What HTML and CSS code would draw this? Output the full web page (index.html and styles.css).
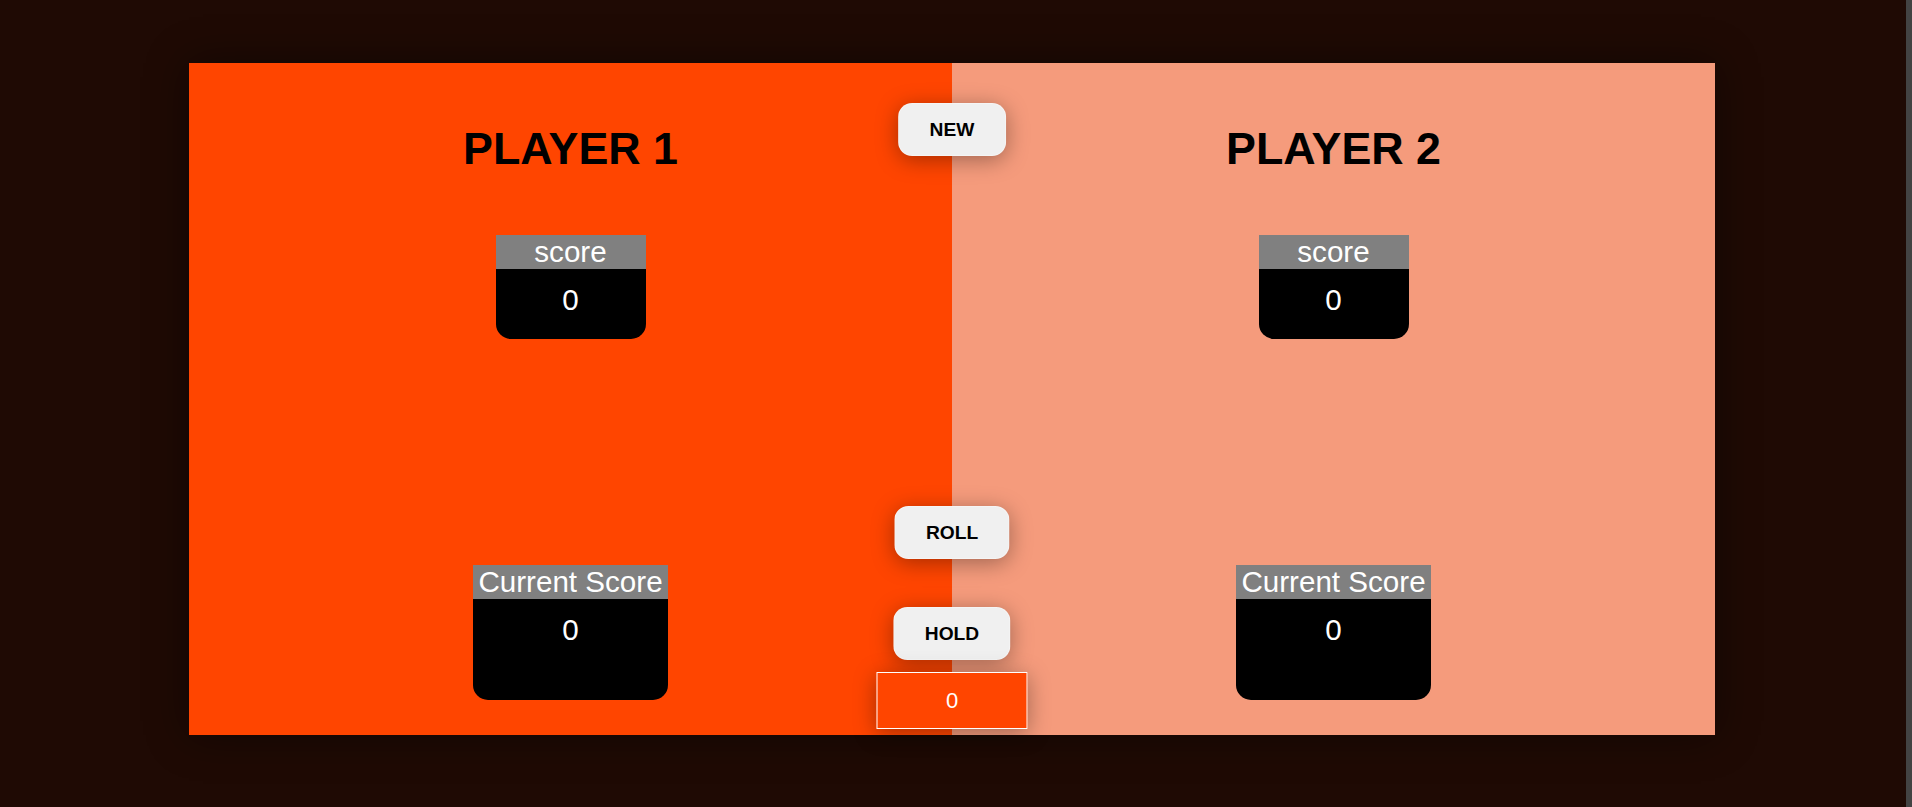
FILE: index.html
```html
<!DOCTYPE html>
<html lang="en">
<head>
<meta charset="utf-8">
<title>Pig Game</title>
<link rel="stylesheet" href="styles.css">
</head>
<body>
<div class="page">
  <main class="game">
    <section class="player player--active">
      <h2 class="player-name">PLAYER 1</h2>
      <div class="score-box">
        <div class="box-label">score</div>
        <div class="box-value">0</div>
      </div>
      <div class="current-box">
        <div class="box-label">Current Score</div>
        <div class="box-value">0</div>
      </div>
    </section>
    <section class="player player--inactive">
      <h2 class="player-name">PLAYER 2</h2>
      <div class="score-box">
        <div class="box-label">score</div>
        <div class="box-value">0</div>
      </div>
      <div class="current-box">
        <div class="box-label">Current Score</div>
        <div class="box-value">0</div>
      </div>
    </section>
    <button class="btn btn--new">NEW</button>
    <button class="btn btn--roll">ROLL</button>
    <button class="btn btn--hold">HOLD</button>
    <div class="dice">0</div>
  </main>
</div>
</body>
</html>
```

FILE: styles.css
```css
html {
  background: #434343;
}
body {
  margin: 0;
  width: 1906px;
  height: 807px;
  background: #1f0a04;
  font-family: "Liberation Sans", Arial, sans-serif;
  overflow: hidden;
}
.page {
  padding-top: 63px;
  padding-left: 189px;
}
.game {
  position: relative;
  width: 1526px;
  height: 672px;
  display: flex;
  box-shadow: 0 0 40px rgba(0, 0, 0, 0.45);
}
.player {
  flex: 1;
  display: flex;
  flex-direction: column;
  align-items: center;
  padding: 60px 0 35px;
  box-sizing: border-box;
}
.player--active {
  background: #ff4500;
}
.player--inactive {
  background: #f59b7c;
}
.player-name {
  margin: 0;
  font-size: 44.8px;
  line-height: 50px;
  font-weight: 700;
  color: #000;
}
.score-box,
.current-box {
  background: #000;
  color: #fff;
  text-align: center;
  border-radius: 0 0 15px 15px;
  font-size: 29.6px;
}
.score-box {
  margin-top: 62px;
  width: 150px;
  height: 104px;
}
.current-box {
  margin-top: auto;
  width: 195px;
  height: 135px;
}
.box-label {
  background: #808080;
  height: 34px;
  line-height: 34px;
  white-space: nowrap;
}
.box-value {
  padding-top: 14px;
  line-height: 34px;
}
.btn {
  position: absolute;
  left: 50%;
  transform: translateX(-50%);
  margin: 0;
  padding: 15px 30.5px;
  line-height: 21px;
  font-family: "Liberation Sans", Arial, sans-serif;
  font-size: 19.2px;
  font-weight: 700;
  color: #000;
  background: #f0f0f0;
  border: 1px solid rgba(255, 255, 255, 0.35);
  border-radius: 14px;
  box-shadow: 0 4px 22px rgba(0, 0, 0, 0.35);
}
.btn--new {
  top: 40px;
}
.btn--roll {
  top: 443px;
}
.btn--hold {
  top: 544px;
}
.dice {
  position: absolute;
  left: 50%;
  top: 609px;
  transform: translateX(-50%);
  width: 151px;
  height: 57px;
  box-sizing: border-box;
  border: 1px solid #fff;
  background: #ff4500;
  color: #fff;
  font-size: 22px;
  line-height: 55px;
  text-align: center;
  box-shadow: 0 4px 22px rgba(0, 0, 0, 0.35);
}
```
